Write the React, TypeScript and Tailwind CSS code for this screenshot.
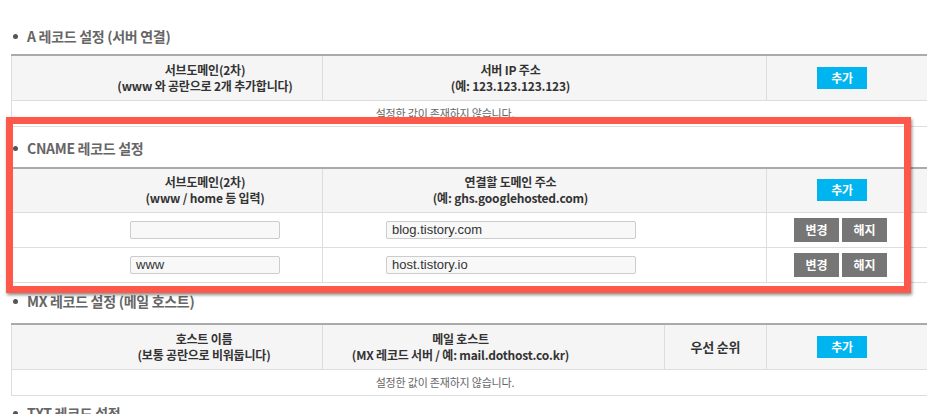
import React from "react";

const KR = "font-['Noto_Sans_CJK_KR',sans-serif]";

const Title = ({ text, className }: { text: string; className?: string }) => (
  <div className={`flex items-center h-[20px] ${className ?? ""}`}>
    <span className="ml-[2px] w-[5px] h-[5px] rounded-full bg-[#555]" />
    <span className="ml-[9px] text-[14px] font-bold text-[#666] tracking-[-0.3px]">{text}</span>
  </div>
);

const th = "border-r border-b border-[#ddd] bg-[#f5f5f5] text-[12px] font-bold text-[#333] leading-[16px] text-center tracking-[-0.2px]";
const td = "border-r border-b border-[#ddd]";

const AddButton = () => (
  <button className="w-[50px] h-[22px] bg-[#00b4f0] text-white text-[12px] leading-[22px]">추가</button>
);

const GrayButton = ({ label }: { label: string }) => (
  <button className="w-[45px] h-[24px] bg-[#767676] text-white text-[12px] font-bold leading-[24px]">{label}</button>
);

const Input = ({ value, w }: { value: string; w: string }) => (
  <div
    className={`${w} h-[18px] border border-[#ccc] rounded-[2px] bg-[#f8f8f8] pl-[5px] text-[13px] leading-[16px] text-[#333] font-['Liberation_Sans',sans-serif]`}
  >
    {value}
  </div>
);

const EmptyRow = ({ span }: { span: number }) => (
  <tr className="h-[26px]">
    <td colSpan={span} className={`${td} text-center pr-[62px] text-[11px] text-[#666] tracking-[-0.2px]`}>
      설정한 값이 존재하지 않습니다.
    </td>
  </tr>
);

const cnameRows = [
  { sub: "", host: "blog.tistory.com" },
  { sub: "www", host: "host.tistory.io" },
];

export default function App() {
  return (
    <div className={`relative w-[927px] h-[414px] overflow-hidden bg-white ${KR}`}>
      <div className="w-[941px] pl-[11px] pt-[26px]">
        <Title text="A 레코드 설정 (서버 연결)" className="mb-[8px]" />
        <table className="table-fixed w-[930px] border-collapse border-t-2 border-t-[#aaa] border-l border-l-[#ddd]">
          <colgroup>
            <col className="w-[311px]" />
            <col className="w-[444px]" />
            <col />
          </colgroup>
          <tbody>
            <tr className="h-[45px]">
              <th className={`${th} pl-[76px]`}>
                서브도메인(2차)
                <br />
                (www 와 공란으로 2개 추가합니다)
              </th>
              <th className={`${th} pr-[68px]`}>
                서버 IP 주소
                <br />
                (예: 123.123.123.123)
              </th>
              <th className={`${th} pr-[23px]`}>
                <AddButton />
              </th>
            </tr>
            <EmptyRow span={3} />
          </tbody>
        </table>

        <Title text="CNAME 레코드 설정" className="mt-[12px] mb-[8px]" />
        <table className="table-fixed w-[930px] border-collapse border-t-2 border-t-[#aaa] border-l border-l-[#ddd]">
          <colgroup>
            <col className="w-[311px]" />
            <col className="w-[444px]" />
            <col />
          </colgroup>
          <tbody>
            <tr className="h-[45px]">
              <th className={`${th} pl-[76px]`}>
                서브도메인(2차)
                <br />
                (www / home 등 입력)
              </th>
              <th className={`${th} pr-[68px]`}>
                연결할 도메인 주소
                <br />
                (예: ghs.googlehosted.com)
              </th>
              <th className={`${th} pr-[23px]`}>
                <AddButton />
              </th>
            </tr>
            {cnameRows.map((r) => (
              <tr key={r.host} className="h-[35px]">
                <td className={`${td} pl-[118px]`}>
                  <Input value={r.sub} w="w-[150px]" />
                </td>
                <td className={`${td} pl-[63px]`}>
                  <Input value={r.host} w="w-[250px]" />
                </td>
                <td className={`${td} pr-[26px]`}>
                  <div className="flex justify-center gap-[3px]">
                    <GrayButton label="변경" />
                    <GrayButton label="해지" />
                  </div>
                </td>
              </tr>
            ))}
          </tbody>
        </table>

        <Title text="MX 레코드 설정 (메일 호스트)" className="mt-[8px] mb-[12px]" />
        <table className="table-fixed w-[930px] border-collapse border-t-2 border-t-[#aaa] border-l border-l-[#ddd]">
          <colgroup>
            <col className="w-[311px]" />
            <col className="w-[342px]" />
            <col className="w-[102px]" />
            <col />
          </colgroup>
          <tbody>
            <tr className="h-[45px]">
              <th className={`${th} pl-[74px]`}>
                호스트 이름
                <br />
                (보통 공란으로 비워둡니다)
              </th>
              <th className={`${th} pr-[66px]`}>
                메일 호스트
                <br />
                (MX 레코드 서버 / 예: mail.dothost.co.kr)
              </th>
              <th className={`${th} text-[13px]`}>우선 순위</th>
              <th className={`${th} pr-[23px]`}>
                <AddButton />
              </th>
            </tr>
            <EmptyRow span={4} />
          </tbody>
        </table>

        <Title text="TXT 레코드 설정" className="mt-[8px]" />
      </div>

      {/* annotation box over the CNAME section */}
      <div className="absolute left-[6px] top-[117px] w-[905px] h-[176px] border-[7px] border-[#fd584a] shadow-[1px_2px_3px_rgba(0,0,0,0.45)] pointer-events-none" />
    </div>
  );
}
